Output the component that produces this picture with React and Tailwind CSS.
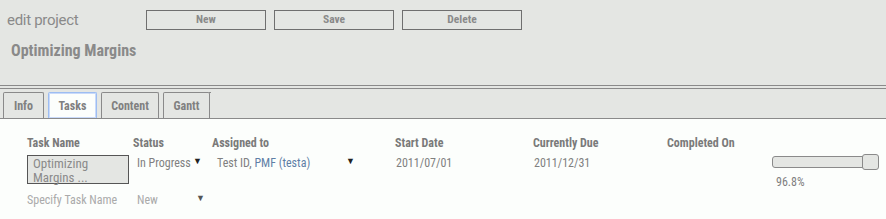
import React from 'react';

const font = { fontFamily: 'Roboto, "Liberation Sans", sans-serif' };

function ActionButton({ label }) {
  return (
    <button className='w-[120px] h-[20px] border border-[#6f6f6f] bg-[#e4e6e3] text-[11.5px] font-bold font-stretch-condensed text-[#8a8a8a] leading-none'>
      {label}
    </button>
  );
}

function Tab({ label, active, width }) {
  return (
    <div
      className={`h-[26px] ${width} flex items-center justify-center rounded-t-[2px] border border-b-0 text-[12px] font-bold font-stretch-condensed text-[#808080] ${
        active ? 'bg-[#fcfefc] border-[#9dbdf2] shadow-[inset_0_0_0_1px_#c9dafa]' : 'bg-[#e4e6e3] border-[#8a8a8a]'
      }`}
    >
      {label}
    </div>
  );
}

function Arrow() {
  return <span className='text-[9px] text-[#222] leading-none'>▼</span>;
}

export default function App() {
  return (
    <div style={font} className='w-[886px] h-[219px] bg-[#fcfefc] overflow-hidden'>
      <div className='h-[85px] bg-[#e4e6e3] pt-[10px]'>
        <div className='flex items-center'>
          <span className='w-[146px] pl-[7px] text-[15px] text-[#8a8a8a] leading-none tracking-[-0.3px] pt-[1px]'>edit project</span>
          <div className='flex gap-[8px]'>
            <ActionButton label='New' />
            <ActionButton label='Save' />
            <ActionButton label='Delete' />
          </div>
        </div>
        <div className='pl-[11px] mt-[13px] text-[16px] font-bold font-stretch-condensed text-[#8a8a8a] leading-none'>
          Optimizing Margins
        </div>
      </div>
      <div className='h-[1px] bg-[#8a8a8a]' />
      <div className='h-[2px] bg-[#e4e6e3]' />
      <div className='h-[1px] bg-[#8a8a8a]' />
      <div className='h-[30px] bg-[#e4e6e3] border-b border-[#8a8a8a] flex items-end gap-[4px] pl-[3px] relative'>
        <Tab label='Info' width='w-[41px]' />
        <Tab label='Tasks' width='w-[49px]' active />
        <Tab label='Content' width='w-[58px]' />
        <Tab label='Gantt' width='w-[47px]' />
        <span className='absolute left-[209px] top-[3px] w-[2px] h-[1px] bg-[#8a8a8a]' />
      </div>
      <div className='pl-[27px] pt-[18px] text-[12px] font-stretch-condensed text-[#808080]'>
        <div className='grid grid-cols-[106px_79px_183px_138px_134px_105px_1fr] font-bold text-[12px] text-[#7a7a7a] leading-none'>
          <span>Task Name</span>
          <span>Status</span>
          <span>Assigned to</span>
          <span>Start Date</span>
          <span>Currently Due</span>
          <span>Completed On</span>
          <span />
        </div>
        <div className='grid grid-cols-[106px_79px_183px_138px_134px_105px_1fr] mt-[6px] leading-none'>
          <div className='w-[102px] h-[29px] border border-[#555] bg-[#e4e6e3] px-[5px] pt-[1px] text-[13px] leading-[14px] text-[#8a8a8a]'>
            Optimizing Margins ...
          </div>
          <div className='flex items-start pt-[2px] pl-[4px]'>
            <span className='w-[56px] whitespace-nowrap'>In Progress</span>
            <Arrow />
          </div>
          <div className='flex items-start pt-[2px] pl-[5px]'>
            <span className='w-[129px] whitespace-nowrap'>
              Test ID, <span className='text-[#5f7fa6]'>PMF (testa)</span>
            </span>
            <Arrow />
          </div>
          <span className='pt-[2px] pl-[1px]'>2011/07/01</span>
          <span className='pt-[2px] pl-[1px]'>2011/12/31</span>
          <span />
          <div className='flex flex-col'>
            <div className='relative w-[107px] h-[16px] -mt-[1px]'>
              <div className='absolute left-0 top-[2px] w-[96px] h-[12px] rounded-[3px] border border-[#8a8a8a] bg-[#e4e6e3]' />
              <div className='absolute left-[90px] top-0 w-[17px] h-[16px] rounded-[3px] border border-[#8a8a8a] bg-[#e4e6e3]' />
            </div>
            <span className='pl-[4px] mt-[6px] text-[#808080]'>96.8%</span>
          </div>
        </div>
        <div className='grid grid-cols-[106px_79px_1fr] mt-[6px] leading-none text-[#aaaaaa]'>
          <span>Specify Task Name</span>
          <div className='flex pl-[4px]'>
            <span className='w-[59px]'>New</span>
            <span className='text-[9px] text-[#555]'>▼</span>
          </div>
        </div>
      </div>
    </div>
  );
}
